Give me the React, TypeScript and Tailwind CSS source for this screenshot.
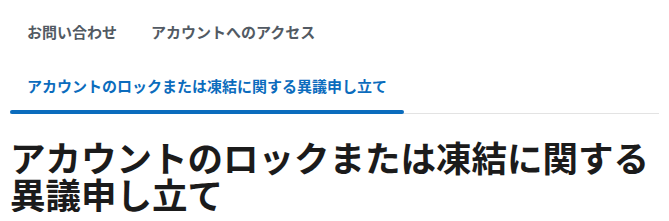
import React from 'react';

const tabs = [
  { label: 'お問い合わせ', active: false },
  { label: 'アカウントへのアクセス', active: false },
  { label: 'アカウントのロックまたは凍結に関する異議申し立て', active: true },
];

export default function App() {
  return (
    <div
      className="bg-white pt-[5px] px-[10px]"
      style={{ fontFamily: '"Noto Sans CJK JP", "Noto Sans", sans-serif' }}
    >
      <nav className="flex flex-wrap border-b border-[#e3e3e3]">
        {tabs.map((tab) => (
          <a
            key={tab.label}
            className={`relative block px-[17px] py-[17px] text-[15px] leading-[20px] font-bold ${
              tab.active ? 'text-[#0b6cbd]' : 'text-[#525a63]'
            }`}
          >
            {tab.label}
            {tab.active && (
              <span className="absolute left-0 right-0 -bottom-px h-[4px] rounded-full bg-[#0b6cbd]" />
            )}
          </a>
        ))}
      </nav>
      <h1 className="mt-[24px] text-[35.5px] leading-[37px] font-bold text-[#1b1b1b]">
        アカウントのロックまたは凍結に関する異議申し立て
      </h1>
    </div>
  );
}
